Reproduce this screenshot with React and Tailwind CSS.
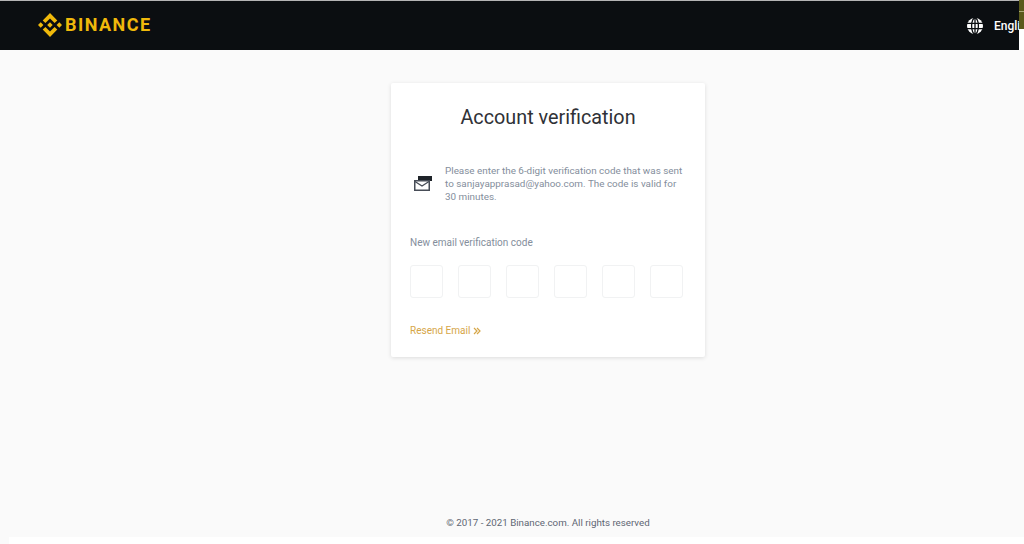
import React from 'react';

function Logo() {
    return (
        <svg width="24" height="24" viewBox="0 0 24 24" fill="#f0b90b" className="shrink-0">
            <path d="M7.4 10.1 12 5.5l4.6 4.6 2.7-2.7L12 0 4.7 7.4z" />
            <path d="M0 12l2.7-2.7L5.4 12l-2.7 2.7z" />
            <path d="M7.4 13.9 12 18.5l4.6-4.6 2.7 2.7L12 24l-7.3-7.4z" />
            <path d="M18.6 12l2.7-2.7L24 12l-2.7 2.7z" />
            <path d="M14.7 12 12 9.2 10 11.2l-.3.3-.5.5L12 14.8z" />
        </svg>
    );
}

function Globe() {
    return (
        <svg width="16" height="16" viewBox="0 0 16 16" fill="none" stroke="#0b0e11" strokeWidth="1.3">
            <circle cx="8" cy="8" r="8" fill="#ffffff" stroke="none" />
            <ellipse cx="8" cy="8" rx="3.4" ry="8" />
            <path d="M8 0v16M0 5.4h16M0 10.6h16" />
        </svg>
    );
}

function MailIcon() {
    return (
        <svg width="18" height="15" viewBox="0 0 18 15" className="shrink-0">
            <path d="M4 0h14v5h-3v1H4z" fill="#1e2329" />
            <path d="M.75 4.75h14.5v9.5H.75z" fill="#ffffff" stroke="#474d57" strokeWidth="1.5" />
            <path d="M1 5.5l7 4.5 7-4.5" fill="none" stroke="#474d57" strokeWidth="1.3" />
        </svg>
    );
}

function CodeBox() {
    return <div className="w-[33px] h-[33px] border border-[#f1f2f3] rounded-[3px] bg-white" />;
}

export default function App() {
    return (
        <div className="relative w-[1024px] h-[544px] overflow-hidden bg-[#fafafa] flex flex-col font-['Roboto','Liberation_Sans',sans-serif]">
            <header className="h-[50px] shrink-0 bg-[#0b0e11] border-t border-[#b4b4b4] flex items-center pl-[38px] pb-[2px]">
                <Logo />
                <span className="ml-[3px] text-[#f0b90b] text-[18px] font-bold tracking-[1.45px] leading-none">BINANCE</span>
                <div className="ml-auto flex items-center w-[57px] gap-[11px] overflow-hidden pt-[2px]">
                    <div className="shrink-0"><Globe /></div>
                    <span className="text-white text-[12px] font-medium whitespace-nowrap">English</span>
                </div>
            </header>

            <main className="flex-1 flex flex-col items-center pl-[72px]">
                <section className="mt-[33px] w-[314px] h-[274px] bg-white rounded-[2px] shadow-[0_1px_4px_rgba(0,0,0,0.12)] px-[19px]">
                    <h1 className="mt-[21px] text-center text-[19.8px] leading-[28px] text-[#2f3136]">Account verification</h1>
                    <div className="mt-[32px] flex items-center gap-[14px] pl-[4px]">
                        <MailIcon />
                        <p className="-ml-px text-[9.9px] leading-[13px] text-[#848e9c] w-[242px]">
                            Please enter the 6-digit verification code that was sent to sanjayapprasad@yahoo.com. The code is valid for 30 minutes.
                        </p>
                    </div>
                    <p className="mt-[33px] text-[10px] leading-[13px] text-[#848e9c]">New email verification code</p>
                    <div className="mt-[16px] flex justify-between w-[273px]">
                        <CodeBox />
                        <CodeBox />
                        <CodeBox />
                        <CodeBox />
                        <CodeBox />
                        <CodeBox />
                    </div>
                    <div className="mt-[26px] flex items-center gap-[3px] text-[10px] leading-[13px] text-[#d6a648]">
                        <span>Resend Email</span>
                        <svg width="8" height="8" viewBox="0 0 8 8" fill="none" stroke="#d6a648" strokeWidth="1.2">
                            <path d="M1 1l3 3-3 3M4 1l3 3-3 3" />
                        </svg>
                    </div>
                </section>
            </main>

            <footer className="absolute left-0 right-0 top-[516px] pl-[72px] text-center text-[9.75px] leading-[13px] text-[#5e6673]">
                © 2017 - 2021 Binance.com. All rights reserved
            </footer>
            <div className="absolute left-[9px] right-0 top-[537px] bottom-0 bg-white" />

            {/* strip of another window over the top right corner */}
            <div className="absolute right-0 top-0 w-[5px] h-[50px] flex flex-col">
                <div className="h-[29px] bg-[#5a5a1c] flex flex-col pt-[11px]">
                    <div className="h-px bg-[#a8a878]" />
                </div>
                <div className="flex-1 bg-white" />
            </div>
        </div>
    );
}
